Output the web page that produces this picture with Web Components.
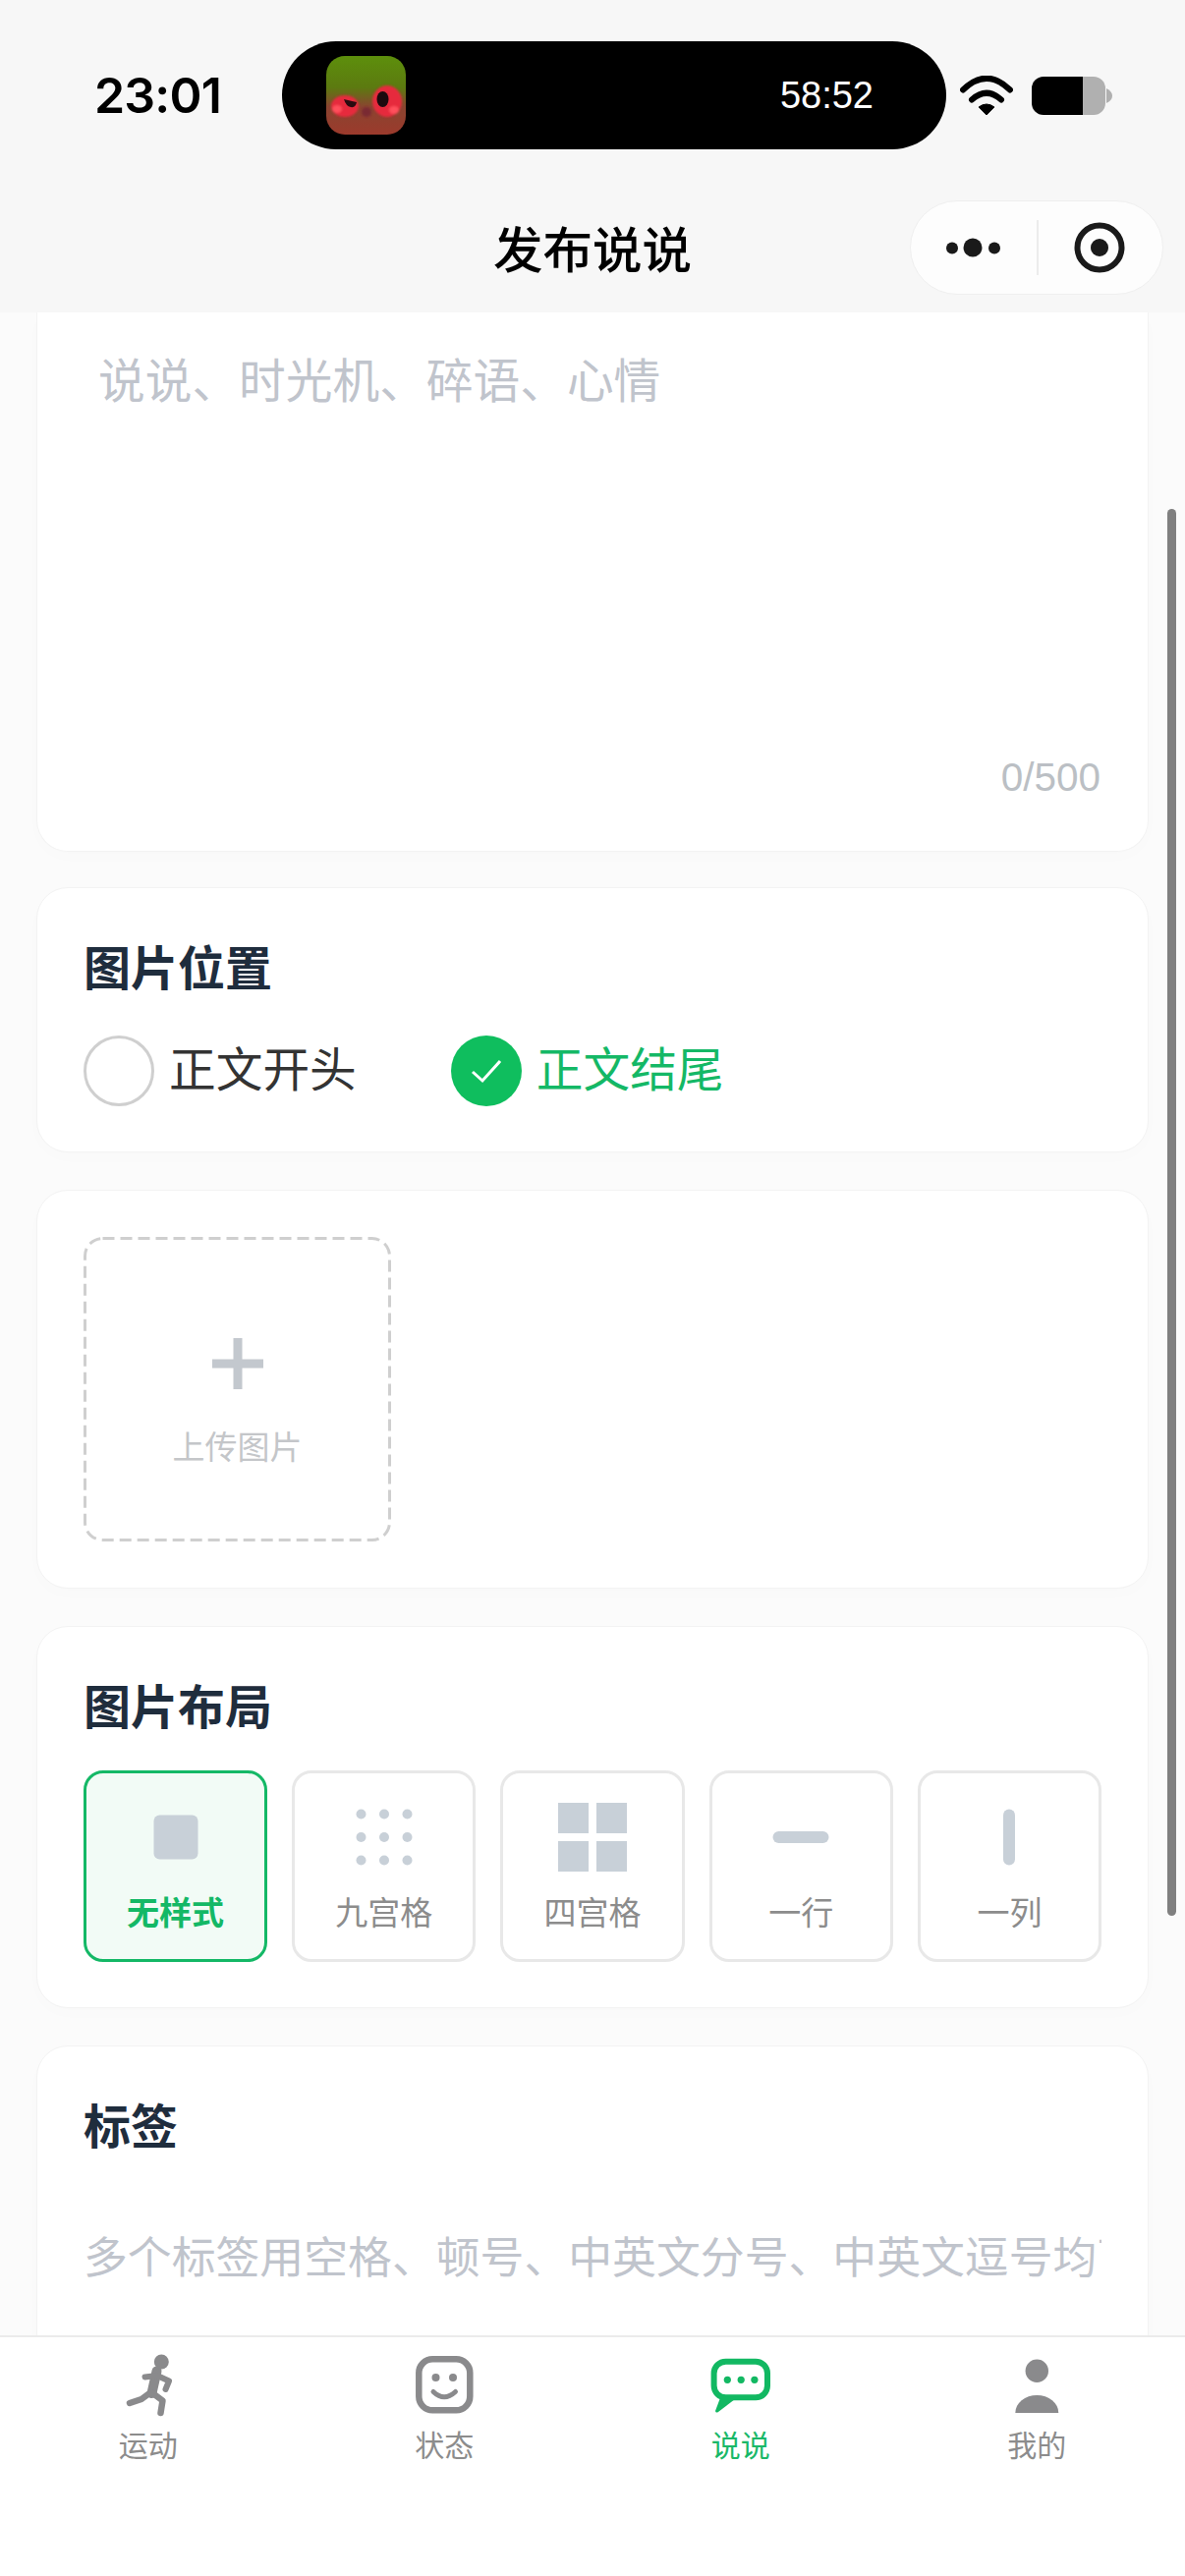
<!DOCTYPE html>
<html lang="zh">
<head>
<meta charset="utf-8">
<title>发布说说</title>
<style>
  html, body { margin: 0; padding: 0; background: #fbfbfb; }
  body { font-family: "Noto Sans CJK SC", "Noto Sans", sans-serif; }
</style>
</head>
<body>
<publish-page>
  <status-bar slot="head"></status-bar>
  <nav-bar slot="head">发布说说</nav-bar>

  <form-card flush class="text-card">
    <text-area-box placeholder="说说、时光机、碎语、心情" count="0/500"></text-area-box>
  </form-card>

  <form-card heading="图片位置">
    <radio-row>
      <radio-option>正文开头</radio-option>
      <radio-option checked>正文结尾</radio-option>
    </radio-row>
  </form-card>

  <form-card tall>
    <upload-box>上传图片</upload-box>
  </form-card>

  <form-card heading="图片布局">
    <layout-row>
      <layout-option kind="none" active>无样式</layout-option>
      <layout-option kind="nine">九宫格</layout-option>
      <layout-option kind="four">四宫格</layout-option>
      <layout-option kind="row">一行</layout-option>
      <layout-option kind="col">一列</layout-option>
    </layout-row>
  </form-card>

  <form-card heading="标签">
    <tag-input placeholder="多个标签用空格、顿号、中英文分号、中英文逗号均可"></tag-input>
  </form-card>

  <tab-bar slot="foot">
    <tab-item icon="run">运动</tab-item>
    <tab-item icon="face">状态</tab-item>
    <tab-item icon="chat" active>说说</tab-item>
    <tab-item icon="user">我的</tab-item>
  </tab-bar>
</publish-page>

<script>
class PublishPage extends HTMLElement {
  constructor() {
    super();
    this.attachShadow({ mode: "open" }).innerHTML = `
      <style>
        :host { display: flex; flex-direction: column; width: 1206px; height: 2622px; overflow: hidden; position: relative; background: #fbfbfb; }
        header { background: #f7f7f7; flex: none; }
        main { flex: 1; min-height: 0; overflow: hidden; display: flex; flex-direction: column; gap: 38px; padding: 0 37px; }
        .thumb { position: absolute; left: 1188px; top: 518px; width: 9px; height: 1432px; border-radius: 5px; background: #808080; }
      </style>
      <header><slot name="head"></slot></header>
      <main><slot></slot></main>
      <slot name="foot"></slot>
      <div class="thumb"></div>`;
  }
}

class StatusBar extends HTMLElement {
  constructor() {
    super();
    this.attachShadow({ mode: "open" }).innerHTML = `
      <style>
        :host { display: flex; align-items: center; height: 110px; padding-top: 42px; }
        .time { width: 287px; box-sizing: border-box; padding-left: 96px; font: 600 50px Inter, "Liberation Sans", sans-serif; color: #000; letter-spacing: -.8px; flex: none; }
        .island { width: 676px; height: 110px; border-radius: 55px; background: #000; display: flex; align-items: center; justify-content: space-between; padding: 0 74px 0 45px; box-sizing: border-box; flex: none; }
        .island svg { display: block; }
        .timer { font: 400 38px "Liberation Sans", sans-serif; color: #fff; }
        .wifi { margin-left: 14px; display: block; }
        .battery { margin-left: 19px; display: block; }
      </style>
      <div class="time">23:01</div>
      <div class="island">
        <svg width="81" height="80" viewBox="0 0 81 80">
          <defs>
            <linearGradient id="fur" x1="0" y1="0" x2="0" y2="1">
              <stop offset="0" stop-color="#5d8f0c"/>
              <stop offset=".4" stop-color="#5c7a10"/>
              <stop offset=".65" stop-color="#8a4430"/>
              <stop offset="1" stop-color="#9c3a2c"/>
            </linearGradient>
            <filter id="soft" x="-30%" y="-30%" width="160%" height="160%"><feGaussianBlur stdDeviation="1.3"/></filter>
            <clipPath id="tile"><rect width="81" height="80" rx="19"/></clipPath>
          </defs>
          <g clip-path="url(#tile)">
            <rect width="81" height="80" fill="url(#fur)"/>
            <g filter="url(#soft)">
              <ellipse cx="19" cy="51" rx="14" ry="11" fill="#e62a3c"/>
              <ellipse cx="62" cy="46" rx="15" ry="16" fill="#e62a3c"/>
              <ellipse cx="11" cy="54" rx="5" ry="4" fill="#ff4f5c"/>
              <ellipse cx="69" cy="55" rx="5" ry="4" fill="#ff4f5c"/>
              <circle cx="41" cy="57" r="5" fill="#7a2a32"/>
            </g>
            <path d="M18 44 Q26 46 31 47 Q30 53 25 52 Q20 51 18 44Z" fill="#2a0b10"/>
            <ellipse cx="57.500" cy="44" rx="6" ry="8" fill="#1d0a0e"/>
          </g>
        </svg>
        <span class="timer">58:52</span>
      </div>
      <svg class="wifi" width="54" height="40" viewBox="0 0 54 40">
        <path d="M3 14.500Q27-9 51 14.500" fill="none" stroke="#000" stroke-width="6" stroke-linecap="round"/>
        <path d="M12 24.500Q27 11 42 24.500" fill="none" stroke="#000" stroke-width="6" stroke-linecap="round"/>
        <path d="M19 32Q27 26 35 32L27 40Z" fill="#000" stroke="#000" stroke-linejoin="round"/>
      </svg>
      <svg class="battery" width="82" height="39" viewBox="0 0 82 39">
        <defs><clipPath id="cell"><rect width="75" height="39" rx="12"/></clipPath></defs>
        <g clip-path="url(#cell)">
          <rect width="52" height="39" fill="#000"/>
          <rect x="52" width="23" height="39" fill="#b0b0b0"/>
        </g>
        <path d="M76 12Q82 15 82 19.500Q82 24 76 27Z" fill="#b0b0b0"/>
      </svg>`;
  }
}

class NavBar extends HTMLElement {
  constructor() {
    super();
    this.attachShadow({ mode: "open" }).innerHTML = `
      <style>
        :host { display: grid; grid-template-columns: 1fr auto 1fr; align-items: center; height: 94px; margin-top: 52px; padding: 0 22px 20px; color: #000; }
        .title { grid-column: 2; font-size: 50.500px; font-weight: 500; line-height: 60px; padding-bottom: 2px; }
        .capsule { grid-column: 3; justify-self: end; width: 258px; height: 96px; box-sizing: border-box; border: 1.5px solid #efefef; border-radius: 48px; background: #fdfdfd; display: flex; align-items: center; }
        .capsule svg { display: block; flex: none; }
        .rule { width: 1.5px; height: 56px; background: #ececec; flex: none; }
      </style>
      <div class="title"><slot></slot></div>
      <div class="capsule">
        <svg width="128" height="60" viewBox="0 0 128 60">
          <circle cx="42" cy="30.500" r="6" fill="#1a1a1a"/>
          <circle cx="63" cy="30" r="9.500" fill="#1a1a1a"/>
          <circle cx="85" cy="30.500" r="6" fill="#1a1a1a"/>
        </svg>
        <div class="rule"></div>
        <svg width="125" height="60" viewBox="0 0 125 60">
          <circle cx="62" cy="30" r="22.500" fill="none" stroke="#1a1a1a" stroke-width="6"/>
          <circle cx="62" cy="30" r="9" fill="#1a1a1a"/>
        </svg>
      </div>`;
  }
}

class FormCard extends HTMLElement {
  constructor() {
    super();
    const heading = this.getAttribute("heading");
    this.attachShadow({ mode: "open" }).innerHTML = `
      <style>
        :host { display: block; flex: none; box-sizing: border-box; background: #fff; border: 1.5px solid #f3f3f3; border-radius: 32px; padding: 46px 47px; box-shadow: 0 6px 18px rgba(0,0,0,.012); }
        :host([flush]) { border-top: 0; border-radius: 0 0 32px 32px; padding: 0 47px 0; margin-bottom: -2px; }
        :host([tall]) { padding-top: 47px; padding-bottom: 47px; }
        h2 { margin: 0; font-size: 48px; line-height: 64px; padding-bottom: 4px; font-weight: 700; color: #1f2d3d; }
      </style>
      ${heading ? `<h2>${heading}</h2>` : ""}
      <slot></slot>`;
  }
}

class TextAreaBox extends HTMLElement {
  constructor() {
    super();
    this.attachShadow({ mode: "open" }).innerHTML = `
      <style>
        :host { display: flex; flex-direction: column; height: 548px; padding-left: 15px; box-sizing: border-box; }
        .ph { font-size: 47.700px; line-height: 70px; margin-top: 32px; color: #c0c4cc; flex: 1; }
        .count { align-self: flex-end; font: 400 40.500px "Liberation Sans", sans-serif; line-height: 44px; color: #bbbfc4; margin: 0 1px 53px 0; }
      </style>
      <div class="ph">${this.getAttribute("placeholder")}</div>
      <div class="count">${this.getAttribute("count")}</div>`;
  }
}

class RadioRow extends HTMLElement {
  constructor() {
    super();
    this.attachShadow({ mode: "open" }).innerHTML = `
      <style>:host { display: flex; gap: 96px; margin-top: 36px; }</style>
      <slot></slot>`;
  }
}

class RadioOption extends HTMLElement {
  constructor() {
    super();
    const on = this.hasAttribute("checked");
    this.attachShadow({ mode: "open" }).innerHTML = `
      <style>
        :host { display: flex; align-items: center; gap: 15px; height: 72px; font-size: 47.700px; color: ${on ? "#14b866" : "#333"}; }
        svg { display: block; flex: none; }
        span { padding-bottom: 9px; }
      </style>
      ${on
        ? `<svg width="72" height="72" viewBox="0 0 72 72"><circle cx="36" cy="36" r="36" fill="#0fbe5e"/><path d="M22 37l10 9 18-20" fill="none" stroke="#fff" stroke-width="3"/></svg>`
        : `<svg width="72" height="72" viewBox="0 0 72 72"><circle cx="36" cy="36" r="34.500" fill="#fff" stroke="#cfcfcf" stroke-width="3"/></svg>`}
      <span><slot></slot></span>`;
  }
}

class UploadBox extends HTMLElement {
  constructor() {
    super();
    this.attachShadow({ mode: "open" }).innerHTML = `
      <style>
        :host { display: flex; flex-direction: column; align-items: center; position: relative; width: 313px; height: 310px; color: #c4c6c9; font-size: 33px; }
        .edge { position: absolute; inset: 0; }
        .plus { display: block; margin-top: 103px; }
        span { line-height: 44px; margin-top: 35px; }
      </style>
      <svg class="edge" width="313" height="310" viewBox="0 0 313 310">
        <rect x="1.500" y="1.500" width="310" height="307" rx="18" fill="none" stroke="#cfcfcf" stroke-width="3" stroke-dasharray="12 6"/>
      </svg>
      <svg class="plus" width="52" height="52" viewBox="0 0 52 52"><path d="M21.500 0h9v21.500H52v9H30.500V52h-9V30.500H0v-9h21.500z" fill="#c3c8ce"/></svg>
      <span><slot></slot></span>`;
  }
}

class LayoutRow extends HTMLElement {
  constructor() {
    super();
    this.attachShadow({ mode: "open" }).innerHTML = `
      <style>:host { display: grid; grid-template-columns: repeat(5, 1fr); gap: 25px; margin-top: 32px; }</style>
      <slot></slot>`;
  }
}

const LAYOUT_ICONS = {
  none: `<rect x="17.500" y="17.500" width="45" height="45" rx="6"/>`,
  nine: [16.500, 40, 63.500].flatMap(y => [16.500, 40, 63.500].map(x => `<circle cx="${x}" cy="${y}" r="5"/>`)).join(""),
  four: `<rect x="5" y="5" width="31" height="31"/><rect x="44" y="5" width="31" height="31"/><rect x="5" y="44" width="31" height="31"/><rect x="44" y="44" width="31" height="31"/>`,
  row: `<rect x="11.500" y="34" width="57" height="12" rx="6"/>`,
  col: `<rect x="34" y="11.500" width="12" height="57" rx="6"/>`
};

class LayoutOption extends HTMLElement {
  constructor() {
    super();
    const kind = this.getAttribute("kind");
    this.attachShadow({ mode: "open" }).innerHTML = `
      <style>
        :host { display: flex; flex-direction: column; align-items: center; height: 195px; box-sizing: border-box; border: 3px solid #e8e8e8; border-radius: 20px; background: #fff; padding-top: 25px; color: #8c8c8c; font-size: 33px; }
        :host([active]) { border-color: #14b866; background: #f2fbf6; color: #14b866; font-weight: 700; }
        svg { display: block; fill: #c8d0d8; }
        span { line-height: 44px; margin-top: 13px; }
      </style>
      <svg width="80" height="80" viewBox="0 0 80 80">${LAYOUT_ICONS[kind]}</svg>
      <span><slot></slot></span>`;
  }
}

class TagInput extends HTMLElement {
  constructor() {
    super();
    this.attachShadow({ mode: "open" }).innerHTML = `
      <style>
        :host { display: block; margin-top: 68px; height: 60px; overflow: hidden; white-space: nowrap; font-size: 44.850px; line-height: 60px; color: #c0c4cc; margin-bottom: 60px; }
      </style>
      ${this.getAttribute("placeholder")}`;
  }
}

class TabBar extends HTMLElement {
  constructor() {
    super();
    this.attachShadow({ mode: "open" }).innerHTML = `
      <style>
        :host { display: grid; grid-template-columns: repeat(4, 1fr); flex: none; height: 245px; box-sizing: border-box; background: #fff; border-top: 2px solid #ebebeb; position: relative; }
      </style>
      <slot></slot>`;
  }
}

const TAB_ICONS = {
  run: `<g fill="none" stroke="currentColor" stroke-linecap="round" stroke-linejoin="round">
      <path d="M40.500 17.500L35.500 40" stroke-width="10"/>
      <path d="M28.500 23.500L41 22L53 27.500L49.500 36" stroke-width="6"/>
      <path d="M34.500 39L25 46L13 50" stroke-width="6.500"/>
      <path d="M36.500 40L46.500 47.500L44.500 60" stroke-width="6.500"/>
    </g><circle cx="45.300" cy="8" r="7.500" fill="currentColor"/>`,
  face: `<rect x="6.300" y="5.300" width="52" height="52" rx="14" fill="none" stroke="currentColor" stroke-width="6.500"/>
    <circle cx="23.500" cy="24" r="4" fill="currentColor"/><circle cx="41" cy="24" r="4" fill="currentColor"/>
    <path d="M21 38.500Q32 49 43.500 38.500" fill="none" stroke="currentColor" stroke-width="5" stroke-linecap="round"/>`,
  chat: `<rect x="4.600" y="7.700" width="54.400" height="36.600" rx="12" fill="none" stroke="currentColor" stroke-width="6"/>
    <path d="M10.500 46L6 58Q6.500 60.500 9 59L26 46Z" fill="currentColor"/>
    <circle cx="18.300" cy="26.300" r="3.600" fill="currentColor"/><circle cx="32.200" cy="26.300" r="3.600" fill="currentColor"/><circle cx="45.900" cy="26.300" r="3.600" fill="currentColor"/>`,
  user: `<circle cx="32.300" cy="17.300" r="11.700" fill="currentColor"/><path d="M10.300 60A22 18 0 0 1 54.300 60Z" fill="currentColor"/>`
};

class TabItem extends HTMLElement {
  constructor() {
    super();
    const on = this.hasAttribute("active");
    this.attachShadow({ mode: "open" }).innerHTML = `
      <style>
        :host { display: flex; flex-direction: column; align-items: center; padding-top: 17px; font-size: 30px; color: #8c8c8c; }
        :host([active]) { color: #1ab868; }
        svg { display: block; color: ${on ? "#12b862" : "#8a8a8c"}; }
        span { line-height: 40px; margin-top: 7px; }
      </style>
      <svg width="64" height="64" viewBox="0 0 64 64">${TAB_ICONS[this.getAttribute("icon")]}</svg>
      <span><slot></slot></span>`;
  }
}

customElements.define("publish-page", PublishPage);
customElements.define("status-bar", StatusBar);
customElements.define("nav-bar", NavBar);
customElements.define("form-card", FormCard);
customElements.define("text-area-box", TextAreaBox);
customElements.define("radio-row", RadioRow);
customElements.define("radio-option", RadioOption);
customElements.define("upload-box", UploadBox);
customElements.define("layout-row", LayoutRow);
customElements.define("layout-option", LayoutOption);
customElements.define("tag-input", TagInput);
customElements.define("tab-bar", TabBar);
customElements.define("tab-item", TabItem);
</script>
</body>
</html>
